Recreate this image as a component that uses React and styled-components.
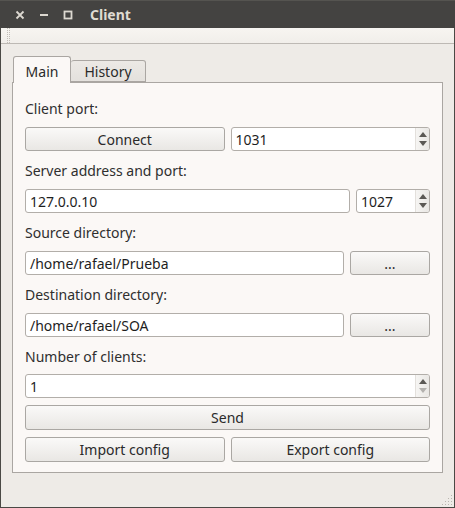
import React from "react";
import styled, { createGlobalStyle } from "styled-components";

const Global = createGlobalStyle`
  html, body { margin: 0; padding: 0; background: #eeebe7; }
  * { box-sizing: border-box; }
  body { font-family: "Noto Sans", "Open Sans", sans-serif; font-size: 14px; color: #3c3c3c; }
`;

const Window = styled.div`
  width: 455px;
  height: 508px;
  display: flex;
  flex-direction: column;
  background: #eeebe7;
  border: 1px solid #4a4945;
  border-top: none;
`;

const TitleBar = styled.div`
  height: 28px;
  margin: 0 -1px;
  background: #444341;
  border-top: 1px solid #555450;
  display: flex;
  align-items: center;
  padding-left: 8px;
`;

const Ctrl = styled.div`
  width: 24px;
  height: 20px;
  display: flex;
  align-items: center;
  justify-content: center;
`;

const Title = styled.div`
  margin-left: 10px;
  font-weight: bold;
  font-size: 14px;
  color: #dfdbd2;
  font-family: "Noto Sans", sans-serif;
`;

const ToolStrip = styled.div`
  height: 16px;
  background: linear-gradient(#f7f5f1, #f1eeea);
  border-bottom: 1px solid #bdb9b4;
  display: flex;
  padding-left: 6px;
`;

const Grip = styled.div`
  width: 3px;
  height: 100%;
  border-left: 1px dotted #c2beb8;
  border-right: 1px dotted #c2beb8;
`;

const Body = styled.div`
  flex: 1;
  padding: 12px 11px 0 11px;
  display: flex;
  flex-direction: column;
`;

const TabBar = styled.div`
  display: flex;
  align-items: flex-end;
  height: 26px;
  padding-left: 1px;
  position: relative;
  z-index: 1;
`;

const Tab = styled.div`
  height: ${(p) => (p.$active ? 27 : 22)}px;
  width: ${(p) => p.$w}px;
  margin-bottom: ${(p) => (p.$active ? -1 : 0)}px;
  background: ${(p) => (p.$active ? "#fbf8f6" : "linear-gradient(#ece9e5, #e4e1dd)")};
  border: 1px solid #aaa6a2;
  border-bottom: ${(p) => (p.$active ? "none" : "1px solid #aaa6a2")};
  border-left: ${(p) => (p.$nolb ? "none" : "1px solid #aaa6a2")};
  border-radius: 3px 3px 0 0;
  display: flex;
  align-items: center;
  justify-content: center;
  padding-top: ${(p) => (p.$active ? 2 : 1)}px;
  color: #2a2a2a;
  font-size: 14px;
`;

const Panel = styled.div`
  height: 391px;
  background: #fbf8f6;
  border: 1px solid #aaa6a2;
  padding: 12px 12px 0 12px;
  display: flex;
  flex-direction: column;
`;

const Label = styled.div`
  height: 26px;
  display: flex;
  align-items: center;
  margin-bottom: ${(p) => p.$mb ?? 6}px;
  color: #2f2f2f;
`;

const Row = styled.div`
  display: ${(p) => (p.$grid ? "grid" : "flex")};
  grid-template-columns: 1fr 1fr;
  gap: 6px;
  margin-bottom: ${(p) => p.$mb ?? 6}px;
`;

const Button = styled.div`
  height: ${(p) => p.$h || 24}px;
  width: ${(p) => (p.$w ? p.$w + "px" : "auto")};
  flex: ${(p) => (p.$w ? "none" : 1)};
  border: 1px solid #aaa7a3;
  border-radius: 3px;
  background: linear-gradient(#faf9f8, #e9e7e4);
  display: flex;
  align-items: center;
  justify-content: center;
  color: #2a2a2a;
  font-size: 14px;
`;

const Input = styled.div`
  height: 24px;
  flex: 1;
  border: 1px solid #b2aea9;
  border-radius: 3px;
  background: #fff;
  display: flex;
  align-items: center;
  padding: 0 4px;
  color: #1e1e1e;
  font-size: 14px;
`;

const SpinBox = styled.div`
  height: 24px;
  width: ${(p) => (p.$w ? p.$w + "px" : "auto")};
  flex: ${(p) => (p.$w ? "none" : 1)};
  border: 1px solid #b2aea9;
  border-radius: 3px;
  background: #fff;
  display: flex;
  overflow: hidden;
`;

const SpinText = styled.div`
  flex: 1;
  display: flex;
  align-items: center;
  padding-left: 4px;
  color: #1e1e1e;
`;

const SpinButtons = styled.div`
  width: 14px;
  border-left: 1px solid #e3e0dc;
  background: linear-gradient(90deg, #f6f5f3, #e9e7e4);
  display: flex;
  flex-direction: column;
  align-items: center;
  justify-content: center;
  gap: 4px;
`;

const Footer = styled.div`
  flex: 1;
  display: flex;
  justify-content: flex-end;
  align-items: flex-end;
  padding: 0 1px 1px 0;
  margin-right: -11px;
`;

const Arrow = ({ up, dim }) => (
  <svg width="8" height="5" viewBox="0 0 8 5">
    <polygon
      points={up ? "0,5 8,5 4,0" : "0,0 8,0 4,5"}
      fill={dim ? "#b3b1ae" : "#5a5854"}
    />
  </svg>
);

const Spin = ({ value, w, downDim }) => (
  <SpinBox $w={w}>
    <SpinText>{value}</SpinText>
    <SpinButtons>
      <Arrow up />
      <Arrow dim={downDim} />
    </SpinButtons>
  </SpinBox>
);

const SizeGrip = () => (
  <svg width="12" height="12" viewBox="0 0 12 12">
    {[
      [10, 2], [10, 5], [7, 5], [10, 8], [7, 8], [4, 8], [10, 11], [7, 11], [4, 11], [1, 11],
    ].map(([x, y], i) => (
      <rect key={i} x={x} y={y - 1} width="1" height="1" fill="#b9b5af" />
    ))}
  </svg>
);

export default function App() {
  return (
    <>
      <Global />
      <Window>
        <TitleBar>
          <Ctrl>
            <svg width="10" height="10" viewBox="0 0 10 10">
              <path d="M1.5 1.5 L8.5 8.5 M8.5 1.5 L1.5 8.5" stroke="#dcd8d0" strokeWidth="1.8" />
            </svg>
          </Ctrl>
          <Ctrl>
            <svg width="10" height="10" viewBox="0 0 10 10">
              <rect x="1" y="4" width="8" height="2" fill="#dcd8d0" />
            </svg>
          </Ctrl>
          <Ctrl>
            <svg width="10" height="10" viewBox="0 0 10 10">
              <rect x="1.5" y="1.5" width="7" height="7" fill="none" stroke="#dcd8d0" strokeWidth="1.8" />
            </svg>
          </Ctrl>
          <Title>Client</Title>
        </TitleBar>
        <ToolStrip>
          <Grip />
        </ToolStrip>
        <Body>
          <TabBar>
            <Tab $active $w={58}>Main</Tab>
            <Tab $w={75} $nolb>History</Tab>
          </TabBar>
          <Panel>
            <Label>Client port:</Label>
            <Row $grid>
              <Button>Connect</Button>
              <Spin value="1031" />
            </Row>
            <Label>Server address and port:</Label>
            <Row>
              <Input>127.0.0.10</Input>
              <Spin value="1027" w={74} />
            </Row>
            <Label>Source directory:</Label>
            <Row>
              <Input>/home/rafael/Prueba</Input>
              <Button $w={80}>...</Button>
            </Row>
            <Label>Destination directory:</Label>
            <Row>
              <Input>/home/rafael/SOA</Input>
              <Button $w={80}>...</Button>
            </Row>
            <Label $mb={5}>Number of clients:</Label>
            <Row $mb={7}>
              <Spin value="1" downDim />
            </Row>
            <Row $mb={7}>
              <Button $h={25}>Send</Button>
            </Row>
            <Row $grid $mb={0}>
              <Button $h={25}>Import config</Button>
              <Button $h={25}>Export config</Button>
            </Row>
          </Panel>
          <Footer>
            <SizeGrip />
          </Footer>
        </Body>
      </Window>
    </>
  );
}
